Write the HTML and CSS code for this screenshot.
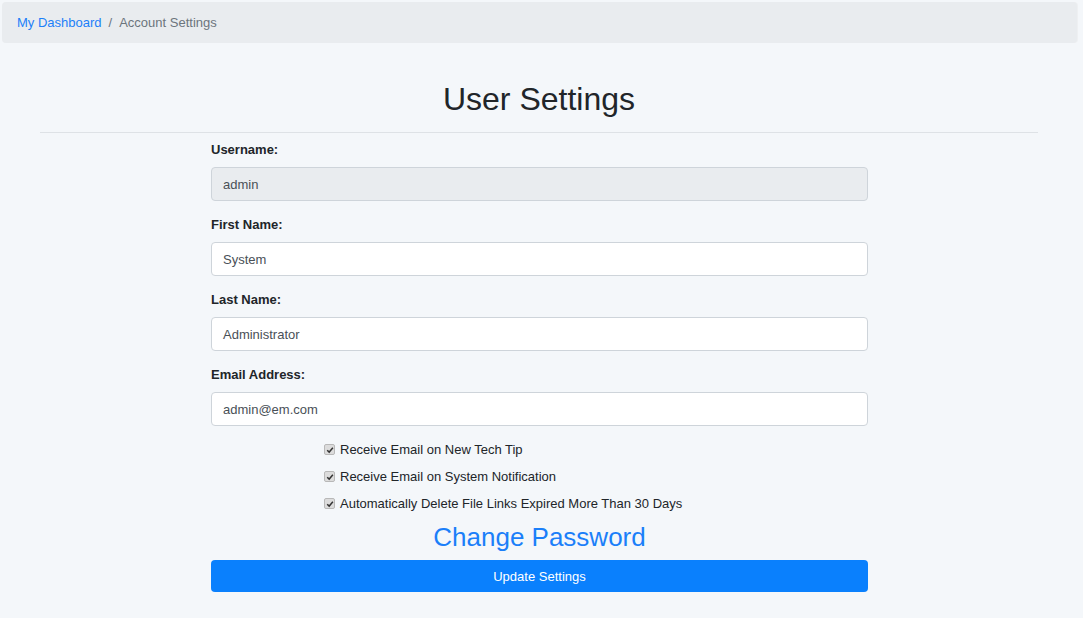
FILE: index.html
```html
<!DOCTYPE html>
<html>
<head>
<meta charset="utf-8">
<link rel="stylesheet" href="styles.css">
</head>
<body>
<nav class="breadcrumb">
  <a href="#" class="crumb-link">My Dashboard</a>
  <span class="crumb-sep">/</span>
  <span class="crumb-current">Account Settings</span>
</nav>
<main class="page">
  <h1 class="title">User Settings</h1>
  <hr class="rule">
  <form class="settings">
    <div class="field">
      <label class="field-label">Username:</label>
      <div class="input input-readonly">admin</div>
    </div>
    <div class="field">
      <label class="field-label">First Name:</label>
      <div class="input">System</div>
    </div>
    <div class="field">
      <label class="field-label">Last Name:</label>
      <div class="input">Administrator</div>
    </div>
    <div class="field">
      <label class="field-label">Email Address:</label>
      <div class="input">admin@em.com</div>
    </div>
    <div class="checks">
      <label class="check"><span class="box"><svg viewBox="0 0 10 10" width="8" height="8"><path d="M1.5 5.2 L4 7.6 L8.6 2.2" fill="none" stroke="#333" stroke-width="1.8"/></svg></span>Receive Email on New Tech Tip</label>
      <label class="check"><span class="box"><svg viewBox="0 0 10 10" width="8" height="8"><path d="M1.5 5.2 L4 7.6 L8.6 2.2" fill="none" stroke="#333" stroke-width="1.8"/></svg></span>Receive Email on System Notification</label>
      <label class="check"><span class="box"><svg viewBox="0 0 10 10" width="8" height="8"><path d="M1.5 5.2 L4 7.6 L8.6 2.2" fill="none" stroke="#333" stroke-width="1.8"/></svg></span>Automatically Delete File Links Expired More Than 30 Days</label>
    </div>
    <a href="#" class="change-pw">Change Password</a>
    <div class="btn">Update Settings</div>
  </form>
</main>
</body>
</html>
```
FILE: styles.css
```css
html, body {
  margin: 0;
  padding: 0;
}
body {
  background: #f4f7fa;
  font-family: "Liberation Sans", Arial, sans-serif;
  font-size: 13px;
  color: #212529;
  padding: 2px 6px 0 2px;
}
.breadcrumb {
  display: flex;
  align-items: center;
  height: 41px;
  background: #e9ecef;
  border-radius: 4px;
  padding: 0 15px;
  box-shadow: 1px 0 0 #eef0f2;
}
.crumb-link {
  color: #1b7ff9;
  text-decoration: none;
}
.crumb-sep {
  color: #6c757d;
  padding: 0 7px;
}
.crumb-current {
  color: #6c757d;
}
.page {
  padding: 0 39px 0 38px;
}
.title {
  margin: 37px 0 0;
  text-align: center;
  font-size: 32px;
  font-weight: 400;
  line-height: 38px;
  color: #212529;
}
.rule {
  margin: 14px 0 0;
  border: 0;
  border-top: 1px solid #dee2e6;
}
.settings {
  box-sizing: border-box;
  width: 658px;
  padding-left: 1px;
  margin: 0 auto;
  padding-top: 6px;
  display: flex;
  flex-direction: column;
}
.field {
  display: flex;
  flex-direction: column;
  margin-bottom: 13px;
}
.field-label {
  font-weight: 700;
  line-height: 21px;
  margin-bottom: 7px;
}
.input {
  height: 34px;
  box-sizing: border-box;
  border: 1px solid #ced4da;
  border-radius: 4px;
  background: #fff;
  padding: 0 11px;
  display: flex;
  align-items: center;
  color: #495057;
}
.input-readonly {
  background: #e9ecef;
}
.checks {
  display: flex;
  flex-direction: column;
  padding-left: 113px;
  margin-top: -3px;
}
.check {
  display: flex;
  align-items: center;
  height: 27px;
  color: #212529;
}
.box {
  width: 9px;
  height: 9px;
  border: 1px solid #b8b8b8;
  border-radius: 2px;
  background: #dcdcdc;
  margin-right: 5px;
  display: flex;
  align-items: center;
  justify-content: center;
}
.change-pw {
  text-align: center;
  font-size: 26px;
  line-height: 30px;
  color: #1b7ff9;
  text-decoration: none;
  margin-top: 5px;
}
.btn {
  margin-top: 8px;
  height: 32px;
  background: #0a80fd;
  border-radius: 4px;
  color: #fff;
  display: flex;
  align-items: center;
  justify-content: center;
}
```
